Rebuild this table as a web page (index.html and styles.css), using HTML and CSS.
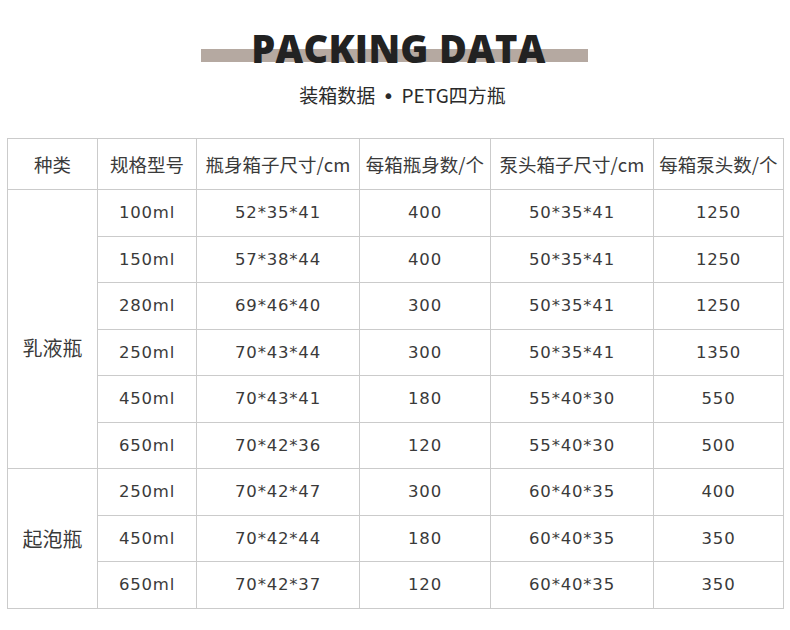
FILE: index.html
```html
<!DOCTYPE html>
<html lang="zh">
<head>
<meta charset="utf-8">
<link rel="stylesheet" href="styles.css">
</head>
<body>
<div class="page">
  <div class="title-wrap">
    <div class="bar"></div>
    <h1 class="title">PACKING DATA</h1>
  </div>
  <p class="subtitle">装箱数据 <span class="dot">•</span> PETG四方瓶</p>
  <table class="data">
    <colgroup>
      <col class="c1"><col class="c2"><col class="c3"><col class="c4"><col class="c5"><col class="c6">
    </colgroup>
    <thead>
      <tr><th>种类</th><th>规格型号</th><th>瓶身箱子尺寸/cm</th><th>每箱瓶身数/个</th><th>泵头箱子尺寸/cm</th><th>每箱泵头数/个</th></tr>
    </thead>
    <tbody>
      <tr><td rowspan="6" class="kind kind-low">乳液瓶</td><td>100ml</td><td>52*35*41</td><td>400</td><td>50*35*41</td><td>1250</td></tr>
      <tr><td>150ml</td><td>57*38*44</td><td>400</td><td>50*35*41</td><td>1250</td></tr>
      <tr><td>280ml</td><td>69*46*40</td><td>300</td><td>50*35*41</td><td>1250</td></tr>
      <tr><td>250ml</td><td>70*43*44</td><td>300</td><td>50*35*41</td><td>1350</td></tr>
      <tr><td>450ml</td><td>70*43*41</td><td>180</td><td>55*40*30</td><td>550</td></tr>
      <tr><td>650ml</td><td>70*42*36</td><td>120</td><td>55*40*30</td><td>500</td></tr>
      <tr><td rowspan="3" class="kind">起泡瓶</td><td>250ml</td><td>70*42*47</td><td>300</td><td>60*40*35</td><td>400</td></tr>
      <tr><td>450ml</td><td>70*42*44</td><td>180</td><td>60*40*35</td><td>350</td></tr>
      <tr><td>650ml</td><td>70*42*37</td><td>120</td><td>60*40*35</td><td>350</td></tr>
    </tbody>
  </table>
</div>
</body>
</html>
```
FILE: styles.css
```css
* { box-sizing: border-box; }
html, body { margin: 0; padding: 0; background: #fff; }
body { font-family: "Noto Sans CJK SC", "Noto Sans", sans-serif; color: #333; }
.page { width: 790px; height: 630px; padding: 0 0 0 7px; }
.title-wrap { position: relative; height: 76px; display: flex; justify-content: center; }
.bar { position: absolute; left: 194px; top: 49px; width: 387px; height: 13px; background: #b5a9a1; }
.title { position: relative; margin: 24px 0 0 0; font-family: "Open Sans", sans-serif; font-weight: 800; font-size: 38px; line-height: 48px; letter-spacing: 0.3px; color: #222; }
.subtitle { margin: 0; text-align: center; font-size: 19px; line-height: 38px; color: #2a2a2a; padding-left: 8px; }
.dot { font-family: "DejaVu Sans", sans-serif; font-size: 20px; margin: 0 3px; }
.data { margin-top: 23px; border-collapse: collapse; table-layout: fixed; width: 776px; }
.c1 { width: 90px; } .c2 { width: 99px; } .c3 { width: 163px; } .c4 { width: 131px; } .c5 { width: 163px; } .c6 { width: 130px; }
.data th, .data td { border: 1px solid #cbcbcb; text-align: center; padding: 0; color: #3a3a3a; }
.data th { height: 51px; font-weight: 400; font-size: 18.5px; letter-spacing: 0; }
.data td { height: 46.5px; font-family: "DejaVu Sans", sans-serif; font-size: 16.5px; letter-spacing: 0.8px; }
.data td.kind { font-family: "Noto Sans CJK SC", sans-serif; font-size: 20px; letter-spacing: 0; }
.data td.kind-low { padding-top: 36px; }
```
